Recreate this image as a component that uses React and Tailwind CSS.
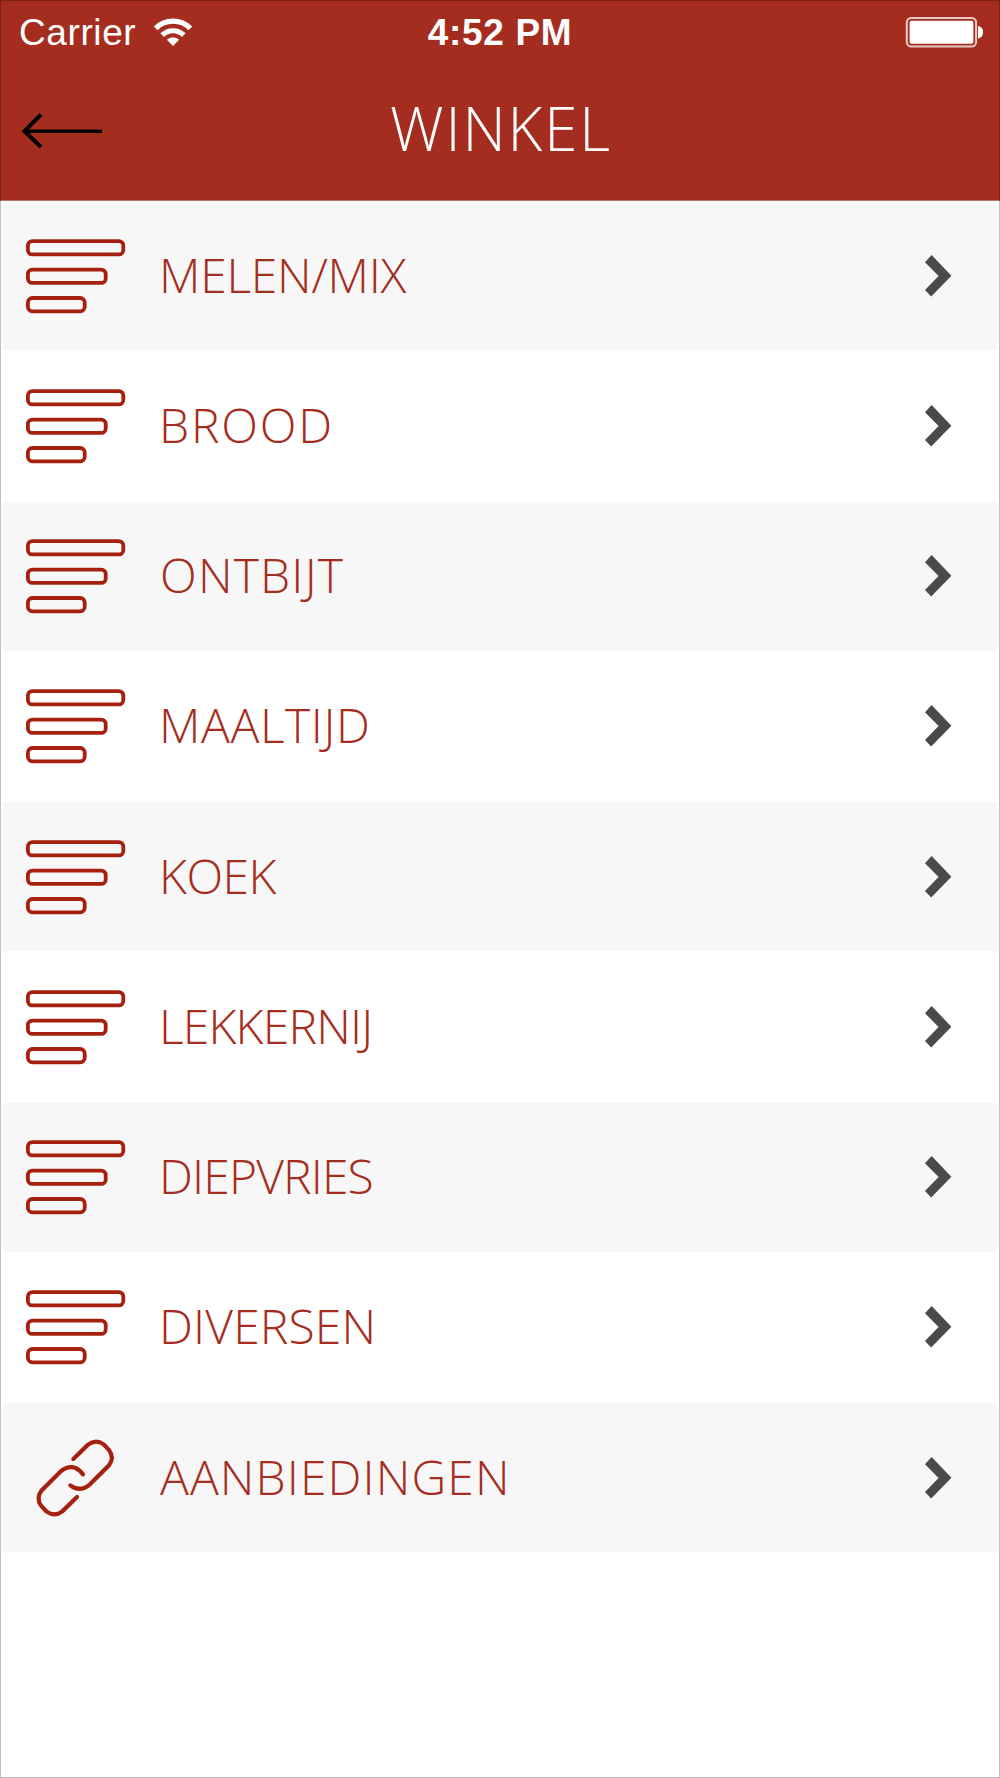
const categories = [
  { label: 'MELEN/MIX', spacing: 'tracking-[-0.26px]' },
  { label: 'BROOD', spacing: 'tracking-[1.8px]' },
  { label: 'ONTBIJT', spacing: 'pl-px tracking-[1.2px]' },
  { label: 'MAALTIJD', spacing: 'tracking-[0.6px]' },
  { label: 'KOEK', spacing: 'tracking-[-0.5px]' },
  { label: 'LEKKERNIJ', spacing: 'tracking-[-0.8px]' },
  { label: 'DIEPVRIES', spacing: 'tracking-[-0.85px]' },
  { label: 'DIVERSEN', spacing: 'tracking-[0.15px]' },
  { label: 'AANBIEDINGEN', spacing: 'pl-px tracking-[1.1px]', link: true },
];

function WifiIcon() {
  return (
    <svg className="ml-[17px] h-[30px] w-[40px]" viewBox="0 0 40 30" fill="none" stroke="#fff">
      <path d="M2.7 11.3 A24.5 24.5 0 0 1 37.3 11.3" strokeWidth="5.4" />
      <path d="M9.2 18.2 A15.3 15.3 0 0 1 30.8 18.2" strokeWidth="5.2" />
      <path d="M20 29 L13.8 22.8 A8.8 8.8 0 0 1 26.2 22.8 Z" fill="#fff" stroke="none" />
    </svg>
  );
}

function BatteryIcon() {
  return (
    <svg className="h-[32px] w-[79px]" viewBox="0 0 79 32">
      <rect x="1.8" y="1.9" width="69.3" height="28.6" rx="4.5" fill="none" stroke="#fff" strokeOpacity="0.75" strokeWidth="2" />
      <rect x="4.6" y="4.8" width="63.8" height="23" rx="2" fill="#fff" />
      <path d="M73 10 C76.4 10.4 78 12.8 78 16.2 C78 19.6 76.4 22 73 22.4 Z" fill="#fff" />
    </svg>
  );
}

function ListIcon() {
  return (
    <svg className="mt-[2px] h-[78px] w-[102px]" viewBox="0 0 102 78" fill="none" stroke="#a6200f" strokeWidth="3.8">
      <rect x="2.9" y="3.1" width="95.4" height="13.3" rx="4.5" />
      <rect x="2.9" y="31.6" width="77.8" height="13.3" rx="4.5" />
      <rect x="2.9" y="60" width="56.8" height="13.3" rx="4.5" />
    </svg>
  );
}

function LinkIcon() {
  return (
    <svg className="ml-[-15px] mt-[4px] h-[90px] w-[120px]" viewBox="0 0 360 270" fill="none" stroke="#a6200f" strokeWidth="12.5" strokeLinecap="round">
      <path d="M190 72 L234 29 Q257 11 281 28 L297 45 Q314 68 297 91 L240 148 Q210 173 181 151" />
      <path d="M201 186 L157 229 Q134 247 110 230 L94 213 Q77 190 94 167 L151 110 Q188 79 219 118" />
    </svg>
  );
}

function Chevron() {
  return (
    <svg className="mr-[45px] h-[42px] w-[28px]" viewBox="0 0 28 42">
      <path d="M7.6 0 L27.4 20.7 L7.2 41.5 L1 35 L14.6 20.9 L1 7.2 Z" fill="#4a4a4a" />
    </svg>
  );
}

export default function App() {
  return (
    <div className="relative flex h-[1778px] w-[1000px] flex-col overflow-hidden bg-white">
      <header className="flex h-[201px] shrink-0 flex-col border-b border-[#b0776f] bg-[#a52d1f] text-white">
        <div className="grid h-[64px] grid-cols-3 items-center pl-[19px] pr-[16px] font-['Liberation_Sans',sans-serif] text-[37px] leading-none">
          <div className="flex items-center">
            <span className="tracking-[0.6px]">Carrier</span>
            <WifiIcon />
          </div>
          <div className="pr-[3px] text-center font-bold tracking-[0.7px]">4:52 PM</div>
          <div className="flex justify-end">
            <BatteryIcon />
          </div>
        </div>
        <div className="grid grow grid-cols-3">
          <button className="flex items-start pl-[20px] pt-[49px]" aria-label="Terug">
            <svg className="h-[36px] w-[84px]" viewBox="0 0 84 36" fill="none" stroke="#000">
              <path d="M4.5 18.2 H82" strokeWidth="3.6" />
              <path d="M21 1.5 L4.5 18.2 L21 34" strokeWidth="4" />
            </svg>
          </button>
          <h1 className="pl-[2px] pt-[24px] text-center font-['Open_Sans',sans-serif] text-[60px] font-light leading-[80px] tracking-[1.9px]">WINKEL</h1>
        </div>
      </header>

      <ul className="flex flex-col">
        {categories.map(({ label, spacing, link }, i) => (
          <li key={label} className="h-[150.25px] px-[3px]">
            <div className={`flex h-[149px] items-center ${i % 2 === 0 ? 'bg-[#f7f7f7]' : ''}`}>
              <div className="flex w-[156px] shrink-0 items-center pl-[22px]">
                {link ? <LinkIcon /> : <ListIcon />}
              </div>
              <span className={`mb-[2px] grow whitespace-nowrap font-['Open_Sans',sans-serif] text-[48px] font-light leading-[64px] text-[#a52d20] ${spacing}`}>
                {label}
              </span>
              <Chevron />
            </div>
          </li>
        ))}
      </ul>

      <div className="pointer-events-none absolute inset-0 border border-black/25" />
    </div>
  );
}
